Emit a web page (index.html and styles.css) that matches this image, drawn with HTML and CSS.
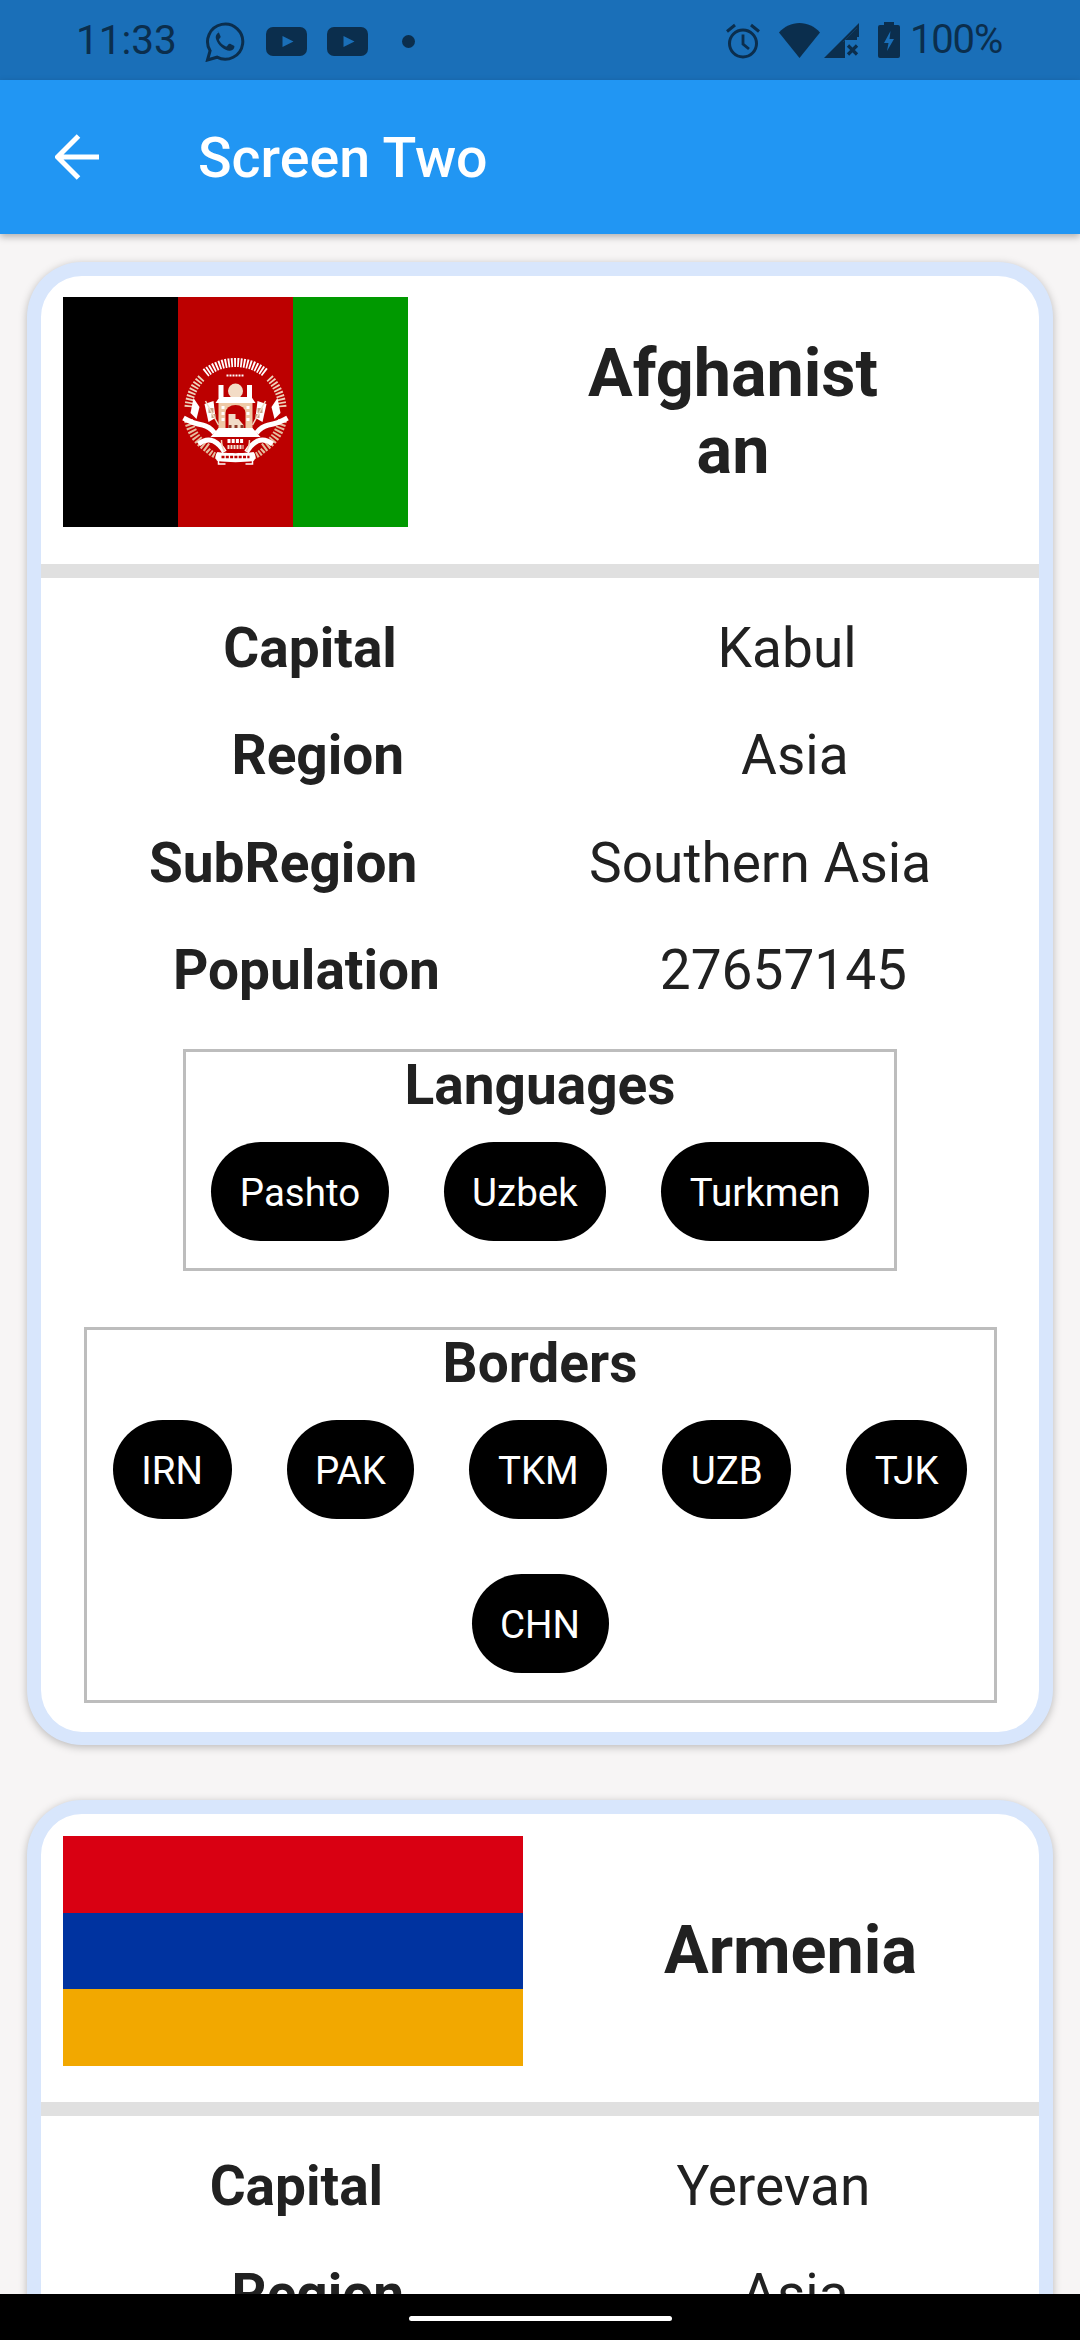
FILE: index.html
```html
<!DOCTYPE html>
<html lang="en">
<head>
<meta charset="utf-8">
<title>Screen Two</title>
<link rel="stylesheet" href="styles.css">
</head>
<body>
<div class="phone">
  <header class="status">
    <span class="clock">11:33</span>
    <svg class="ic ic-wa" viewBox="0 0 40 40"><path d="M2.500 38l2.600-9.300A17.600 17.600 0 1 1 12 35.200z" fill="none" stroke="#0b2e4d" stroke-width="3" stroke-linejoin="miter"/><path d="M14.400 10.600c-.6 0-1.600.3-2.300 1.200-1 1.200-1.800 2.900-1.100 5.200 1 3.300 3 6 5.700 8.200 2.700 2.100 5.400 3.300 7.600 3.500 2 .2 4-.9 4.700-2.400.4-.9.5-2 .3-2.300-.3-.4-3.900-2.200-4.600-2.300-.5-.1-.9.2-1.200.6l-1.500 1.900c-.3.3-.7.4-1.100.2-3.100-1.300-5.300-3.300-6.900-6.200-.2-.4-.1-.8.2-1.100l1.200-1.500c.3-.4.4-.8.2-1.200l-1.700-4c-.2-.6-1.100-.8-1.500-.8z" fill="#0b2e4d"/></svg>
    <svg class="ic ic-yt" viewBox="0 0 41 29"><rect width="41" height="29" rx="7" fill="#0b2e4d"/><path d="M16.500 9l11 5.500-11 5.500z" fill="#1a6fb8"/></svg>
    <svg class="ic ic-yt" viewBox="0 0 41 29"><rect width="41" height="29" rx="7" fill="#0b2e4d"/><path d="M16.500 9l11 5.500-11 5.500z" fill="#1a6fb8"/></svg>
    <span class="dot"></span>
    <span class="spacer"></span>
    <svg class="ic ic-alarm" viewBox="0 0 34 36"><circle cx="17" cy="20.500" r="13.500" fill="none" stroke="#0b2e4d" stroke-width="3"/><path d="M17 11.500v9.500l6 5" fill="none" stroke="#0b2e4d" stroke-width="2.800"/><path d="M1 8.500L9 2M33 8.500L25 2" fill="none" stroke="#0b2e4d" stroke-width="3"/></svg>
    <svg class="ic ic-wifi" viewBox="0 0 41 35"><path d="M0 9.500C5.500 3.500 12.500 0 20.500 0S35.500 3.500 41 9.500L20.500 35z" fill="#0b2e4d"/></svg>
    <svg class="ic ic-signal" viewBox="0 0 35 36"><path d="M0 36L35 1v14h-2V6L19 20v16z" fill="#0b2e4d"/><path d="M33 6v12H21v18H19V20z" fill="#0b2e4d"/><path d="M24 23.500l9 9m0-9l-9 9" stroke="#0b2e4d" stroke-width="3.200" fill="none"/></svg>
    <svg class="ic ic-batt" viewBox="0 0 22 36"><path d="M6 0h10v3h4a2 2 0 0 1 2 2v29a2 2 0 0 1-2 2H2a2 2 0 0 1-2-2V5a2 2 0 0 1 2-2h4z" fill="#0b2e4d"/><path d="M12.500 9L6 21h4.500L9 29l7-12h-4.500z" fill="#1a6fb8"/></svg>
    <span class="pct">100%</span>
  </header>

  <nav class="appbar">
    <svg class="back" viewBox="0 0 44 46"><path d="M2 23h42M23.500 2L2.500 23l21 21" fill="none" stroke="#fff" stroke-width="5"/></svg>
    <h1 class="title">Screen Two</h1>
  </nav>

  <main class="list">
    <article class="card">
      <div class="head">
        <svg class="flag flag-af" viewBox="0 0 345 230">
          <rect width="115" height="230" fill="#000"/>
          <rect x="115" width="115" height="230" fill="#bc0000"/>
          <rect x="230" width="115" height="230" fill="#009900"/>
          <g transform="translate(172.500 114)">
            <g id="half" fill="none">
              <path d="M-34-33A48 48 0 0 0-47-4" stroke="#efd3bb" stroke-width="8" stroke-dasharray="1.800 1.600"/>
              <path d="M-47 9C-44 22-38 30-28 37" stroke="#e6bd9e" stroke-width="9" stroke-dasharray="2 1.600"/>
              <path d="M-28 39C-24 43-20 45-16 46" stroke="#e6bd9e" stroke-width="6" stroke-dasharray="2 1.400"/>
              <path d="M-52 7C-45 11-40 13-33 14-28 15-24 18-21 22" stroke="#fff" stroke-width="5"/>
              <path d="M-37 33C-32 29-27 28-22 30-18 32-14 36-11 41" stroke="#fff" stroke-width="5"/>
              <path d="M-42-13L-36-4-39 8-45 2z" fill="#fff"/>
              <path d="M-31-7L-22-10-20 7-27 11z" fill="#fff"/>
              <path d="M-27-3h5v5h-5zM-24 3h4v4h-4z" fill="#c9a58a"/>
              <path d="M-30-10L-17 14" stroke="#f0dcc8" stroke-width="1.500"/>
              <path d="M-14 29c0 5 1 8 3 11" stroke="#f0d0b8" stroke-width="1.500"/>
            </g>
            <use href="#half" transform="scale(-1 1)"/>
            <path d="M-30-38A48 48 0 0 1 30-38" fill="none" stroke="#fff" stroke-width="9" stroke-dasharray="1.800 1.300"/>
            <path d="M-9-35.500h18" stroke="#fff" stroke-width="2" stroke-dasharray="2 1"/>
            <rect x="-17" y="-26" width="5" height="13" fill="#fff"/>
            <rect x="11.500" y="-26" width="5" height="13" fill="#fff"/>
            <circle cy="-20" r="7.500" fill="#f3dcc6"/>
            <path d="M-20-8L-16-14H16L20-8z" fill="#fff"/>
            <rect x="-17" y="-8" width="34" height="26" fill="#eec9a6"/>
            <path d="M-14-5h3v3h-3zM-14 1h3v3h-3zM-14 7h3v3h-3zM11-5h3v3h-3zM11 1h3v3h-3zM11 7h3v3h-3z" fill="#fff"/>
            <path d="M-10 18V2a10 8 0 0 1 20 0v16z" fill="#bc0000"/>
            <path d="M-7 18V3h7v5h3l5 6v4z" fill="#f2dcc7"/>
            <path d="M-25 26L-17 17H17L25 26z" fill="#fff"/>
            <path d="M-7 14h3v3h-3zM-1 14h3v3h-3zM5 14h3v3h-3z" fill="#8a3a28"/>
            <path d="M-8 30h16" stroke="#fff" stroke-width="4" stroke-dasharray="3 1.200"/>
            <path d="M-8 36h16" stroke="#f4e2d2" stroke-width="4" stroke-dasharray="2 1"/>
            <path d="M-18 41c8 1.500 28 1.500 36 0 2.500 2.500 2.500 7 0 9-10 1.500-26 1.500-36 0-2.500-2-2.500-6.500 0-9z" fill="#fff"/>
            <path d="M-14 46h28" stroke="#bc0000" stroke-width="2.500" stroke-dasharray="3 1.300"/>
            <path d="M-17 50v3h7M17 50v3h-7" stroke="#fff" stroke-width="1.500" fill="none"/>
          </g>
        </svg>
        <h2 class="name">Afghanist<br>an</h2>
      </div>
      <div class="divider"></div>
      <div class="rows">
        <div class="row"><span class="key">Capital</span><span class="val">Kabul</span></div>
        <div class="row"><span class="key">Region</span><span class="val">Asia</span></div>
        <div class="row"><span class="key">SubRegion</span><span class="val">Southern Asia</span></div>
        <div class="row"><span class="key">Population</span><span class="val">27657145</span></div>
      </div>
      <section class="box box-lang">
        <h3 class="box-title">Languages</h3>
        <div class="chips">
          <span class="chip">Pashto</span>
          <span class="chip">Uzbek</span>
          <span class="chip">Turkmen</span>
        </div>
      </section>
      <section class="box box-border">
        <h3 class="box-title">Borders</h3>
        <div class="chips">
          <span class="chip">IRN</span>
          <span class="chip">PAK</span>
          <span class="chip">TKM</span>
          <span class="chip">UZB</span>
          <span class="chip">TJK</span>
          <span class="chip">CHN</span>
        </div>
      </section>
    </article>

    <article class="card">
      <div class="head">
        <svg class="flag flag-am" viewBox="0 0 460 230">
          <rect width="460" height="77" fill="#d90012"/>
          <rect y="77" width="460" height="76" fill="#0033a0"/>
          <rect y="153" width="460" height="77" fill="#f2a800"/>
        </svg>
        <h2 class="name">Armenia</h2>
      </div>
      <div class="divider"></div>
      <div class="rows">
        <div class="row"><span class="key">Capital</span><span class="val">Yerevan</span></div>
        <div class="row"><span class="key">Region</span><span class="val">Asia</span></div>
      </div>
    </article>
  </main>

  <footer class="navbar"><span class="pill"></span></footer>
</div>
</body>
</html>
```

FILE: styles.css
```css
* { box-sizing: border-box; }
html, body { margin: 0; padding: 0; }
body { width: 1080px; height: 2340px; overflow: hidden; font-family: Roboto, "Noto Sans", sans-serif; background: #f7f5f5; }
.phone { width: 1080px; height: 2340px; display: flex; flex-direction: column; overflow: hidden; }

.status { height: 80px; flex: none; background: #1a6fb8; display: flex; align-items: center; padding: 0 78px 0 76px; color: #0b2e4d; }
.clock { font-size: 40.500px; line-height: 80px; width: 129px; }
.pct { font-size: 40px; letter-spacing: -1.200px; line-height: 80px; margin-left: 10px; }
.spacer { flex: 1; }
.ic { display: block; flex: none; }
.ic-wa { width: 40px; height: 40px; margin-top: 3px; }
.ic-yt { width: 41px; height: 29px; margin-left: 20px; margin-top: 2px; }
.ic-wa + .ic-yt { margin-left: 21px; }
.dot { width: 13px; height: 13px; border-radius: 50%; background: #0b2e4d; margin-left: 34px; margin-top: 2px; }
.ic-alarm { width: 34px; height: 36px; margin-top: 1px; }
.ic-wifi { width: 41px; height: 35px; margin-left: 19px; }
.ic-signal { width: 35px; height: 36px; margin-left: 4px; }
.ic-batt { width: 22px; height: 36px; margin-left: 19px; }

.appbar { height: 154px; flex: none; background: #2196f3; display: flex; align-items: center; position: relative; z-index: 2; box-shadow: 0 3px 7px rgba(0,0,0,.28); padding-left: 55px; }
.back { width: 44px; height: 46px; display: block; margin-top: -1px; }
.title { margin: 3px 0 0 99px; font-size: 55.500px; font-weight: 500; color: #fff; }

.list { flex: 1; min-height: 0; overflow: hidden; padding: 27.600px 27px 0; display: flex; flex-direction: column; gap: 55px; }
.card { flex: none; background: #fff; border-style: solid; border-color: #d8e6fc; border-width: 14px 14px 13px; border-radius: 55px; box-shadow: 0 2px 9px rgba(0,0,0,.25); padding-bottom: 29px; }

.head { display: flex; align-items: center; padding: 21.500px 22px 36.500px; }
.flag { display: block; flex: none; height: 230px; }
.flag-af { width: 345px; }
.flag-am { width: 460px; }
.name { flex: 1; margin: 0; padding-left: 41px; text-align: center; font-size: 66.500px; font-weight: 700; color: #212121; line-height: 77px; }
.divider { height: 14px; background: #e0e0e0; }

.rows { padding: 16.500px 22px 24.500px; }
.row { display: flex; justify-content: space-around; align-items: center; height: 107.500px; font-size: 55px; color: #212121; }
.key { font-weight: 700; }
.val { font-weight: 400; }

.box { border: 3px solid #bdbdbd; margin: 0 auto; text-align: center; padding: 0 20px 27.500px; }
.box-lang { width: 714px; }
.box-border { width: 913px; margin-top: 55.500px; }
.box-title { margin: 0; font-size: 55px; line-height: 66px; font-weight: 700; color: #212121; }
.chips { display: flex; flex-wrap: wrap; justify-content: center; gap: 55px; margin-top: 24px; }
.chip { height: 99px; padding: 0 28.500px; border-radius: 49.500px; background: #000; color: #fff; font-size: 38.500px; line-height: 101px; }

.navbar { height: 46px; flex: none; background: #000; display: flex; justify-content: center; position: relative; z-index: 3; padding-top: 22px; }
.pill { width: 263px; height: 5px; border-radius: 3px; background: #fff; display: block; }
```
